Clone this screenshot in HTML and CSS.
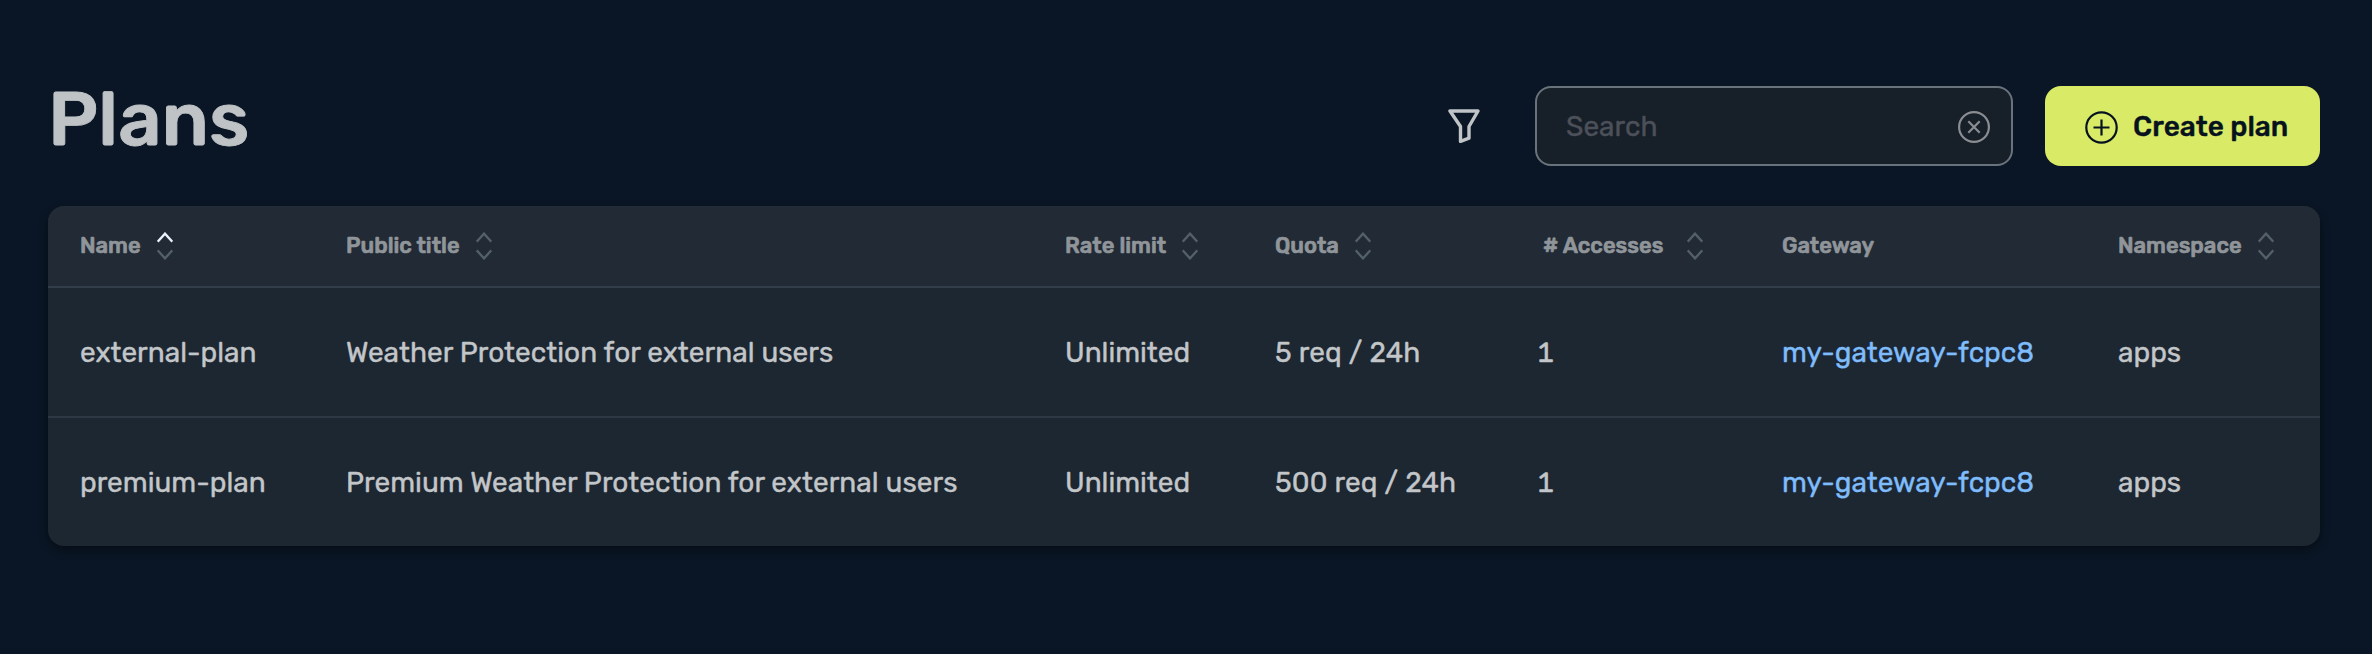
FILE: index.html
```html
<!DOCTYPE html>
<html lang="en">
<head>
<meta charset="utf-8">
<title>Plans</title>
<link rel="stylesheet" href="styles.css">
</head>
<body>
<svg width="0" height="0" class="sprite">
  <symbol id="sort" viewBox="0 0 16 28">
    <path class="sort-up" d="M.7 9.6 8 1.6l7.300 8"/>
    <path class="sort-down" d="M.7 18.400l7.300 8 7.300-8"/>
  </symbol>
</svg>
<main class="page">
  <header class="toolbar">
    <h1 class="title">Plans</h1>
    <button class="filter" aria-label="Filter">
      <svg width="32" height="34" viewBox="0 0 32 34"><path d="M2 2h28L21 17.500v11.700l-8.500 3.100V17.500z"/></svg>
    </button>
    <div class="search">
      <span class="placeholder">Search</span>
      <svg class="clear" width="32" height="32" viewBox="0 0 32 32"><circle cx="16" cy="16" r="14.900"/><path d="m10.300 10.300 11.400 11.400m0-11.400L10.300 21.700"/></svg>
    </div>
    <button class="create">
      <svg width="33" height="33" viewBox="0 0 33 33"><circle cx="16.500" cy="16.500" r="15.200"/><path d="M16.500 8.500v16M8.500 16.500h16"/></svg>
      <span>Create plan</span>
    </button>
  </header>
  <section class="table">
    <div class="row head">
      <div class="cell sorted"><span>Name</span><svg class="sort"><use href="#sort"/></svg></div>
      <div class="cell"><span>Public title</span><svg class="sort"><use href="#sort"/></svg></div>
      <div class="cell"><span>Rate limit</span><svg class="sort"><use href="#sort"/></svg></div>
      <div class="cell"><span>Quota</span><svg class="sort"><use href="#sort"/></svg></div>
      <div class="cell numeric"><span># Accesses</span><svg class="sort"><use href="#sort"/></svg></div>
      <div class="cell"><span>Gateway</span></div>
      <div class="cell"><span>Namespace</span><svg class="sort"><use href="#sort"/></svg></div>
    </div>
    <div class="row">
      <div class="cell">external-plan</div>
      <div class="cell title-text">Weather Protection for external users</div>
      <div class="cell">Unlimited</div>
      <div class="cell quota">5 req / 24h</div>
      <div class="cell count">1</div>
      <div class="cell"><a class="link">my-gateway-fcpc8</a></div>
      <div class="cell">apps</div>
    </div>
    <div class="row">
      <div class="cell">premium-plan</div>
      <div class="cell title-text">Premium Weather Protection for external users</div>
      <div class="cell">Unlimited</div>
      <div class="cell quota">500 req / 24h</div>
      <div class="cell count">1</div>
      <div class="cell"><a class="link">my-gateway-fcpc8</a></div>
      <div class="cell">apps</div>
    </div>
  </section>
</main>
</body>
</html>
```
FILE: styles.css
```css
* { box-sizing: border-box; }
body {
  margin: 0;
  height: 654px;
  overflow: hidden;
  background: #0a1625;
  color: #c3c6c9;
  font: 400 28px/34px Rubik, Roboto, sans-serif;
  -webkit-text-stroke: .4px currentColor;
}
.sprite { display: block; }
svg { display: block; flex: none; fill: none; stroke: currentColor; }
button { border: 0; padding: 0; background: none; font: inherit; color: inherit; }

.page { padding: 86px 52px 0 48px; }
.toolbar { display: flex; align-items: center; height: 80px; margin-bottom: 40px; }
.title {
  margin: -14px auto 0 0;
  font-size: 76px;
  line-height: 90px;
  font-weight: 500;
  color: #bfc3c6;
  -webkit-text-stroke-width: .9px;
}
.filter { margin-right: 55px; color: #c0c4c7; }
.filter svg { stroke-width: 3.400; stroke-linejoin: round; }
.search {
  display: flex;
  align-items: center;
  justify-content: space-between;
  width: 478px;
  height: 80px;
  margin-right: 32px;
  padding: 2px 21px 0 29px;
  border: 2px solid #69737c;
  border-radius: 16px;
  background: #171f28;
}
.placeholder { color: #4c5059; }
.clear { color: #8a8d92; stroke-width: 2.200; }
.create {
  display: flex;
  align-items: center;
  width: 275px;
  height: 80px;
  padding: 2px 0 0 40px;
  gap: 15px;
  border-radius: 16px;
  background: #d9ea66;
  color: #07121f;
  font-weight: 500;
  white-space: nowrap;
}
.create svg { stroke-width: 2.200; }

.table {
  border-radius: 16px;
  background: #1c2732;
  overflow: hidden;
  box-shadow: 0 4px 10px rgba(0, 0, 0, .4);
}
.row {
  display: grid;
  grid-template-columns: 266px 719px 210px 262px 245px 336px 1fr;
  align-items: center;
  height: 128px;
  padding: 2px 0 0 32px;
  white-space: nowrap;
}
.row + .row + .row { height: 130px; border-top: 2px solid #2d3844; }
.head {
  height: 82px;
  padding-top: 0;
  border-bottom: 2px solid #323e49;
  background: #212a35;
  color: #90959a;
  font-size: 22px;
  line-height: 28px;
  font-weight: 500;
  -webkit-text-stroke-width: .7px;
}
.head .cell { display: flex; align-items: center; gap: 16px; }
.head .numeric { gap: 24px; padding-left: 6px; }
.title-text { letter-spacing: .04px; }
.quota { letter-spacing: .12px; }
.count { font-variant-numeric: tabular-nums; }
.sort { width: 16px; height: 28px; color: #53606b; stroke-width: 2.300; }
.sorted { --up: #e8f1fc; }
.sort-up { stroke: var(--up, currentColor); }
.link { color: #7fbcfb; }
```
